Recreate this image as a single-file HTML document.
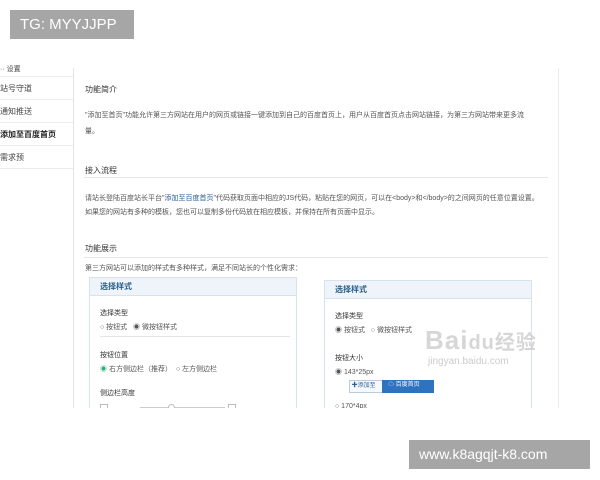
<!DOCTYPE html>
<html><head><meta charset="utf-8"><style>
*{margin:0;padding:0;box-sizing:border-box}
body{width:600px;height:480px;background:#fff;position:relative;overflow:hidden;font-family:"Liberation Sans","Noto Sans CJK SC",sans-serif;color:#444}
.clip{position:absolute;left:0;top:0;width:600px;height:408px;overflow:hidden}
.a{position:absolute;white-space:nowrap}
.s{font-size:7px;color:#555}
.h{font-size:8px;color:#333}
.side{position:absolute;left:0;top:68px;width:74px;height:340px;border-right:1px solid #e4e4e4;background:#fff}
.side div{height:23px;border-bottom:1px solid #ececec;font-size:8px;line-height:23px;color:#444}
.line{position:absolute;height:1px;background:#e6e6e6}
.panel{position:absolute;border:1px solid #d6e2ec;background:#fff}
.ph{height:18px;background:#eef4f9;border-bottom:1px solid #d6e2ec;font-size:8px;font-weight:bold;color:#2a5f8a;line-height:18px;padding-left:10px}
.tag{position:absolute;background:#a6a6a6;color:#fff;font-size:15px;line-height:29px;padding:0 10px}
</style></head><body>
<div class="clip">
<div class="side">
<div style="height:9px;line-height:4px;font-size:7px">·· 设置</div>
<div>站号守道</div>
<div>通知推送</div>
<div style="font-weight:bold;color:#222">添加至百度首页</div>
<div>需求预</div>
</div>
<div class="line" style="left:558px;top:68px;width:1px;height:340px;background:#ececec"></div>
<div class="a h" style="left:85px;top:84px">功能简介</div>
<div class="a s" style="left:85px;top:110px">"添加至首页"功能允许第三方网站在用户的网页或链接一键添加到自己的百度首页上，用户从百度首页点击网站链接，为第三方网站带来更多流</div>
<div class="a s" style="left:85px;top:126px">量。</div>
<div class="a h" style="left:85px;top:165px">接入流程</div>
<div class="line" style="left:84px;top:177px;width:464px"></div>
<div class="a s" style="left:85px;top:193px">请站长登陆百度站长平台"<span style="color:#2a5f9a">添加至百度首页</span>"代码获取页面中相应的JS代码，粘贴在您的网页，可以在&lt;body&gt;和&lt;/body&gt;的之间网页的任意位置设置。</div>
<div class="a s" style="left:85px;top:207px">如果您的网站有多种的模板，您也可以复制多份代码放在相应模板，并保持在所有页面中显示。</div>
<div class="a h" style="left:85px;top:243px">功能展示</div>
<div class="line" style="left:84px;top:257px;width:464px"></div>
<div class="a s" style="left:85px;top:263px">第三方网站可以添加的样式有多种样式，满足不同站长的个性化需求：</div>
<div class="panel" style="left:89px;top:277px;width:208px;height:160px">
<div class="ph">选择样式</div>
<div class="a s" style="left:10px;top:30px;color:#333">选择类型</div>
<div class="a s" style="left:10px;top:44px">○ 按钮式 &nbsp; ◉ 微按钮样式</div>
<div class="line" style="left:10px;top:58px;width:190px"></div>
<div class="a s" style="left:10px;top:72px;color:#333">按钮位置</div>
<div class="a s" style="left:10px;top:86px;color:#3a7">◉ <span style="color:#555">右方侧边栏（推荐）&nbsp; ○ 左方侧边栏</span></div>
<div class="a s" style="left:10px;top:110px;color:#333">侧边栏高度</div>
<div class="a" style="left:10px;top:126px;width:8px;height:8px;border:1px solid #bbb"></div>
<div class="a" style="left:50px;top:129px;width:85px;height:1px;background:#ccc"></div>
<div class="a" style="left:78px;top:126px;width:7px;height:7px;border:1px solid #bbb;border-radius:50%;background:#fff"></div>
<div class="a" style="left:138px;top:126px;width:8px;height:8px;border:1px solid #bbb"></div>
</div>
<div class="panel" style="left:324px;top:280px;width:208px;height:160px">
<div class="ph">选择样式</div>
<div class="a s" style="left:10px;top:30px;color:#333">选择类型</div>
<div class="a s" style="left:10px;top:44px">◉ 按钮式 &nbsp; ○ 微按钮样式</div>
<div class="a s" style="left:10px;top:72px;color:#333">按钮大小</div>
<div class="a s" style="left:10px;top:86px">◉ 143*25px</div>
<div class="a" style="left:24px;top:99px;height:13px;width:84px;border:1px solid #bcd;font-size:6px;line-height:11px;background:#f6f9fc;color:#2a5f9a">&nbsp;✚添加至<span style="position:absolute;left:32px;top:-1px;width:52px;height:13px;background:#2f73c0;color:#fff;padding-left:6px">☁ 百度首页</span></div>
<div class="a s" style="left:10px;top:122px">○ 170*4px</div>
</div>
<div class="a" style="left:425px;top:325px;font-size:26px;color:rgba(200,200,200,.75);font-weight:bold;letter-spacing:1px">Bai<span style="font-size:20px">du</span><span style="font-size:20px">经验</span></div>
<div class="a" style="left:428px;top:356px;font-size:10px;color:rgba(190,190,190,.8)">jingyan.baidu.com</div>
</div>
<div class="tag" style="left:10px;top:10px;width:124px">TG: MYYJJPP</div>
<div class="tag" style="left:409px;top:440px;width:181px;font-size:14px">www.k8agqjt-k8.com</div>
</body></html>
